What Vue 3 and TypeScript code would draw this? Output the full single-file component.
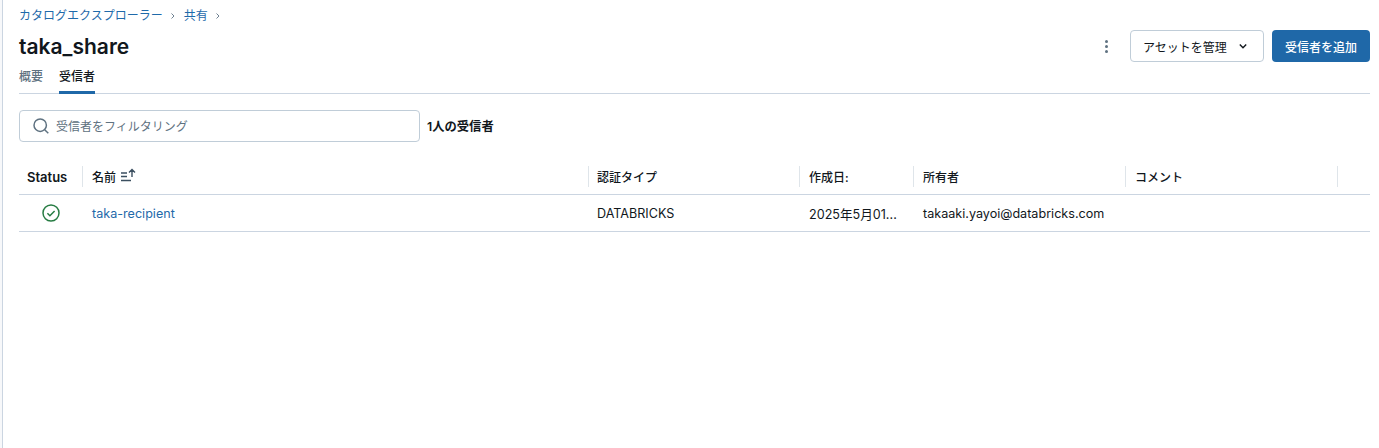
<template>
  <div class="page">
    <div class="content">
      <nav class="breadcrumbs">
        <a class="link">カタログエクスプローラー</a>
        <svg class="crumb-sep" width="12" height="12" viewBox="0 0 12 12"><path d="M4.5 3.5 7 6 4.5 8.5" fill="none" stroke="#6f8191" stroke-width="1" /></svg>
        <a class="link">共有</a>
        <svg class="crumb-sep" width="12" height="12" viewBox="0 0 12 12"><path d="M4.5 3.5 7 6 4.5 8.5" fill="none" stroke="#6f8191" stroke-width="1" /></svg>
      </nav>

      <header class="title-row">
        <h1 class="title">taka_share</h1>
        <div class="actions">
          <button class="kebab" aria-label="More">
            <span></span><span></span><span></span>
          </button>
          <button class="btn btn-default">
            アセットを管理
            <svg width="12" height="12" viewBox="0 0 12 12"><path d="M2.8 4.6 6 7.8l3.2-3.2" fill="none" stroke="#11171c" stroke-width="1.4" /></svg>
          </button>
          <button class="btn btn-primary">受信者を追加</button>
        </div>
      </header>

      <div class="tabs">
        <div v-for="tab in tabs" :key="tab" class="tab" :class="{ active: tab === activeTab }">{{ tab }}</div>
      </div>

      <div class="filter-row">
        <label class="search">
          <svg width="18" height="18" viewBox="0 0 18 18"><circle cx="8.2" cy="8.2" r="6.2" fill="none" stroke="#5f7281" stroke-width="1.5" /><path d="m12.7 12.7 3.6 3.6" stroke="#5f7281" stroke-width="1.5" /></svg>
          <input type="text" placeholder="受信者をフィルタリング" />
        </label>
        <span class="count">1人の受信者</span>
      </div>

      <div class="table">
        <div class="row head">
          <div v-for="col in columns" :key="col.label" class="cell" :class="col.cls">
            <span>{{ col.label }}</span>
            <svg v-if="col.sorted" class="sort" width="16" height="14" viewBox="0 0 16 14"><path d="M1 5h6M1 8.5h6M1 12.5h10M12 9V1.5M9 4.5l3-3 3 3" fill="none" stroke="#3b4f60" stroke-width="1.4" /></svg>
          </div>
          <div class="cell c-end"></div>
        </div>
        <div v-for="r in recipients" :key="r.name" class="row body">
          <div class="cell c-status">
            <svg width="18" height="18" viewBox="0 0 18 18"><circle cx="9" cy="9" r="8" fill="none" stroke="#277c43" stroke-width="1.5" /><path d="m5.4 9.2 2.5 2.5 4.7-4.8" fill="none" stroke="#277c43" stroke-width="1.5" /></svg>
          </div>
          <div class="cell c-name"><a class="link">{{ r.name }}</a></div>
          <div class="cell c-auth">{{ r.auth }}</div>
          <div class="cell c-date">{{ r.created }}</div>
          <div class="cell c-owner">{{ r.owner }}</div>
          <div class="cell c-comment">{{ r.comment }}</div>
          <div class="cell c-end"></div>
        </div>
      </div>
    </div>
  </div>
</template>

<script setup lang="ts">
import { ref } from 'vue'

interface Column {
  label: string
  cls: string
  sorted?: boolean
}

const tabs = ['概要', '受信者']
const activeTab = ref('受信者')

const columns: Column[] = [
  { label: 'Status', cls: 'c-status' },
  { label: '名前', cls: 'c-name', sorted: true },
  { label: '認証タイプ', cls: 'c-auth' },
  { label: '作成日:', cls: 'c-date' },
  { label: '所有者', cls: 'c-owner' },
  { label: 'コメント', cls: 'c-comment' }
]

const recipients = [
  {
    name: 'taka-recipient',
    auth: 'DATABRICKS',
    created: '2025年5月01...',
    owner: 'takaaki.yayoi@databricks.com',
    comment: ''
  }
]
</script>

<style>
html,
body {
  background: #f7f8fa;
}
</style>

<style scoped>
.page {
  height: 448px;
  margin-left: 2px;
  background: #fff;
  border-left: 1px solid #cbd5e1;
  box-sizing: border-box;
  overflow: hidden;
  font-family: Inter, "Noto Sans CJK JP", sans-serif;
  font-size: 12px;
  color: #11171c;
}

.content {
  padding: 0 9px 0 16px;
}

.breadcrumbs {
  display: flex;
  align-items: center;
  height: 16px;
  padding-top: 8px;
  gap: 4.5px;
  line-height: 16px;
}

.crumb-sep {
  flex: none;
}

.link {
  color: #1f6aaa;
}

.title-row {
  display: flex;
  align-items: center;
  justify-content: space-between;
  height: 36px;
  margin-top: 4px;
}

.title {
  margin: 2px 0 0;
  font-size: 21px;
  line-height: 28px;
  font-weight: 600;
}

.actions {
  display: flex;
  align-items: center;
}

.kebab {
  display: flex;
  flex-direction: column;
  align-items: center;
  gap: 2px;
  width: 16px;
  padding: 0;
  margin-right: 16px;
  background: none;
  border: none;
}

.kebab span {
  width: 3px;
  height: 3px;
  border-radius: 50%;
  background: #5f7281;
}

.btn {
  height: 32px;
  border-radius: 4px;
  font: inherit;
  box-sizing: border-box;
  white-space: nowrap;
}

.btn-default {
  display: flex;
  align-items: center;
  gap: 10px;
  width: 134px;
  padding: 0 12px;
  background: #fff;
  border: 1px solid #c0cdd8;
  color: #11171c;
}

.btn-primary {
  width: 98px;
  margin-left: 8px;
  background: #1f68a8;
  border: none;
  color: #fff;
  font-weight: 500;
}

.tabs {
  display: flex;
  gap: 16px;
  height: 26px;
  margin-top: 4px;
  border-bottom: 1px solid #cbd5e1;
  box-sizing: border-box;
}

.tab {
  height: 25px;
  line-height: 17px;
  box-sizing: border-box;
  color: #5f7281;
  font-weight: 500;
}

.tab.active {
  color: #11171c;
  border-bottom: 3px solid #1f68a8;
  height: 26px;
}

.filter-row {
  display: flex;
  align-items: center;
  gap: 8px;
  margin-top: 16px;
}

.search {
  display: flex;
  align-items: center;
  gap: 6px;
  width: 401px;
  height: 32px;
  padding-left: 12px;
  border: 1px solid #c0cdd8;
  border-radius: 4px;
  box-sizing: border-box;
}

.search input {
  flex: 1;
  border: none;
  outline: none;
  padding: 1px 0 0;
  font: inherit;
  color: #11171c;
}

.search input::placeholder {
  color: #5f7281;
  opacity: 1;
}

.count {
  font-size: 12.3px;
  font-weight: 600;
  margin: -1px 0 0 -1px;
}

.table {
  margin-top: 20px;
}

.row {
  display: grid;
  grid-template-columns: 64px 506px 211px 114px 212px 212px 1fr;
  border-bottom: 1px solid #cbd5e1;
  box-sizing: border-box;
}

.row.head {
  height: 33px;
  font-weight: 500;
  padding-bottom: 8px;
  align-items: center;
}

.row.body {
  height: 37px;
  align-items: center;
  font-size: 12.6px;
}

.cell {
  display: flex;
  align-items: center;
  padding-left: 9px;
  white-space: nowrap;
  min-width: 0;
}

.cell.c-auth {
  padding-left: 8px;
}

.head .cell {
  height: 21px;
  border-right: 1px solid #dfe5ea;
  margin-top: 4px;
}

.head .cell.c-end {
  border-right: none;
}

.head .cell.c-status {
  padding-left: 8px;
  font-size: 13px;
  font-weight: 600;
}

.body .c-status {
  justify-content: center;
  padding-left: 0;
  padding-right: 0;
}

.sort {
  margin-left: 4px;
  margin-top: -3px;
}
</style>
